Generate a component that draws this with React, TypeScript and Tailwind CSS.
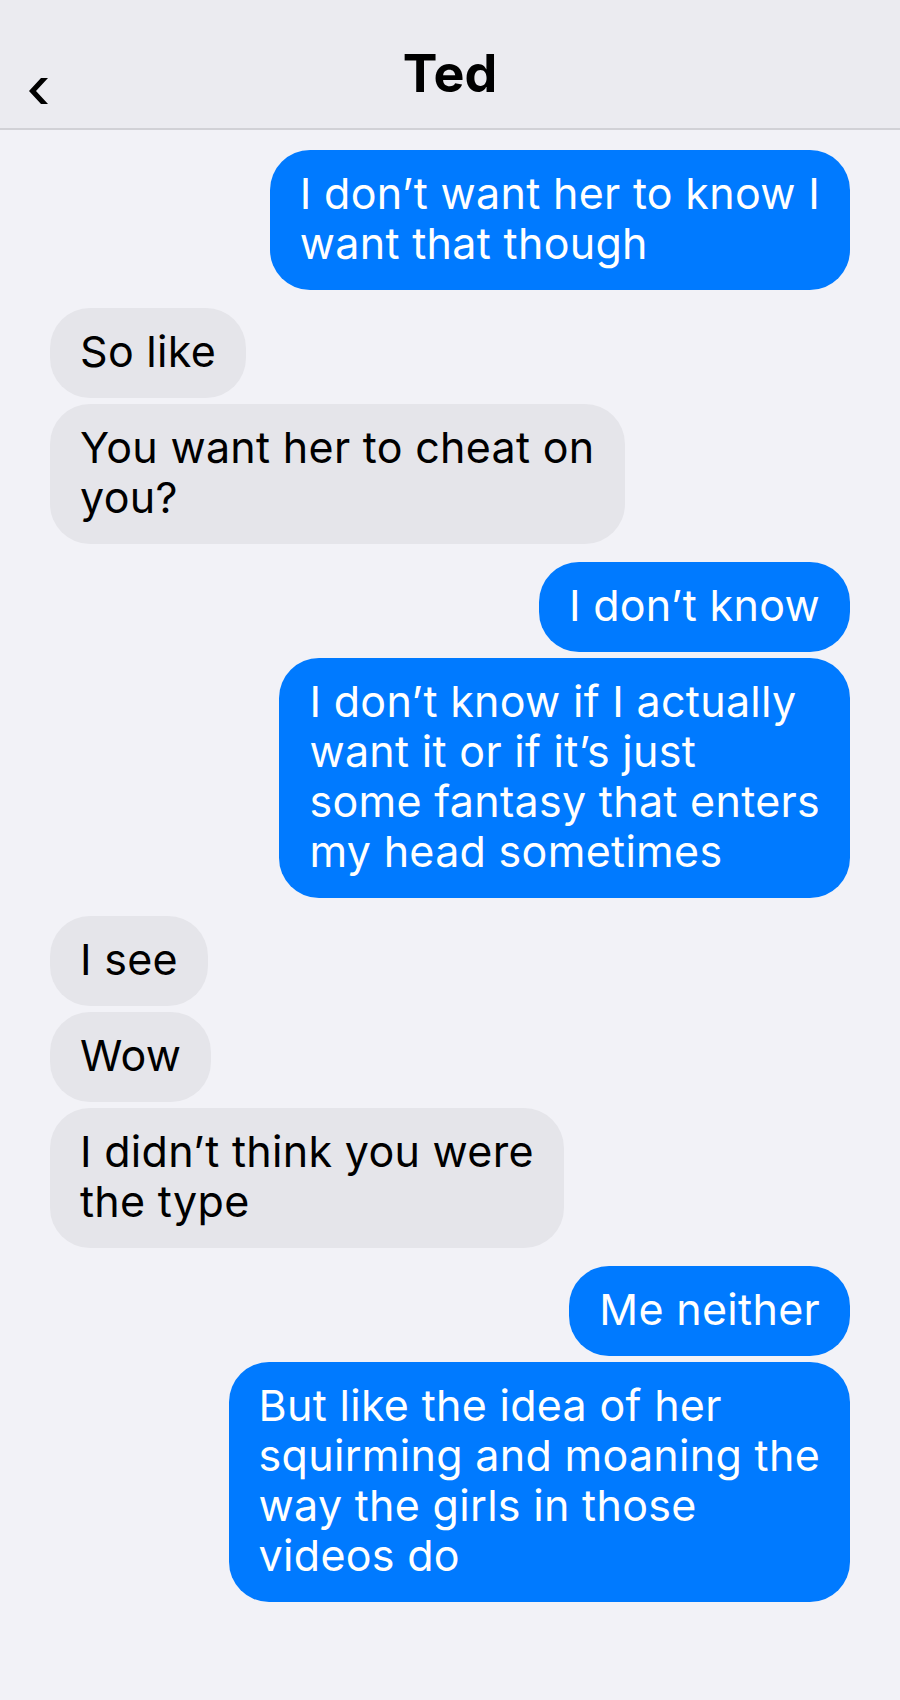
import React from 'react';

type Sender = 'me' | 'them';

interface Message {
  from: Sender;
  text: string;
}

// line breaks are kept as they appear in the thread
const messages: Message[] = [
  { from: 'me', text: 'I don’t want her to know I\nwant that though' },
  { from: 'them', text: 'So like' },
  { from: 'them', text: 'You want her to cheat on\nyou?' },
  { from: 'me', text: 'I don’t know' },
  { from: 'me', text: 'I don’t know if I actually\nwant it or if it’s just\nsome fantasy that enters\nmy head sometimes' },
  { from: 'them', text: 'I see' },
  { from: 'them', text: 'Wow' },
  { from: 'them', text: 'I didn’t think you were\nthe type' },
  { from: 'me', text: 'Me neither' },
  { from: 'me', text: 'But like the idea of her\nsquirming and moaning the\nway the girls in those\nvideos do' },
];

function BackChevron() {
  return (
    <svg width="19" height="26" viewBox="0 0 19 26" className="text-black">
      <polygon points="12,0 19,0 7,13 19,26 12,26 0,13" fill="currentColor" />
    </svg>
  );
}

function Bubble({ msg, prev }: { msg: Message; prev?: Message }) {
  const mine = msg.from === 'me';
  // tighter spacing when the same person sends several in a row
  const spacing = !prev ? '' : prev.from === msg.from ? 'mt-[6px]' : 'mt-[18px]';

  return (
    <div className={`flex ${mine ? 'justify-end' : 'justify-start'} ${spacing}`}>
      <div
        className={`max-w-[660px] whitespace-pre-line rounded-[40px] px-[30px] pt-[18px] pb-[22px] text-[43px] leading-[50px] tracking-[0.3px] ${
          mine ? 'bg-[#007aff] text-white' : 'bg-[#e5e5ea] text-black'
        }`}
      >
        {msg.text}
      </div>
    </div>
  );
}

export default function App() {
  return (
    <div className="min-h-screen bg-[#f2f2f7] font-['Inter','Noto_Sans',sans-serif]">
      {/* Nav bar */}
      <header className="relative flex h-[130px] items-center justify-center border-b-2 border-[#d1d1d6] bg-[#ebebf0] pt-[19px]">
        <button type="button" className="absolute left-[29px] top-[78px] flex">
          <BackChevron />
        </button>
        <h1 className="text-[52px] font-bold leading-none text-black">Ted</h1>
      </header>

      {/* Thread */}
      <main className="px-[50px] pt-[20px] pb-[40px]">
        {messages.map((m, i) => (
          <Bubble key={i} msg={m} prev={messages[i - 1]} />
        ))}
      </main>
    </div>
  );
}
